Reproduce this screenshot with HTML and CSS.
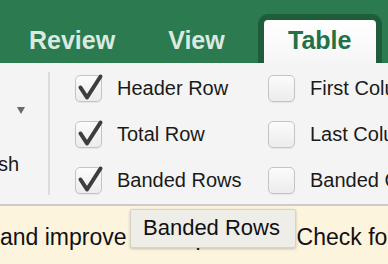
FILE: index.html
```html
<!DOCTYPE html>
<html lang="en">
<head>
    <meta charset="UTF-8">
    <meta name="viewport" content="width=device-width, initial-scale=1.0">
    <title>Table Ribbon</title>
    <link rel="stylesheet" href="styles.css">
</head>
<body>
    <nav class="tabs">
        <div class="tab">Review</div>
        <div class="tab">View</div>
        <div class="tab tab-active">Table</div>
    </nav>
    <div class="ribbon">
        <div class="refresh">
            <span class="caret"></span>
            <span class="refresh-label">Refresh</span>
        </div>
        <div class="sep"></div>
        <div class="options">
            <label class="option">
                <span class="box"><svg width="27" height="27" viewBox="0 0 27 27"><path d="M5.5 12.5 L12 22.5 L25.5 1.5" /></svg></span>
                Header Row
            </label>
            <label class="option"><span class="box"></span>First Column</label>
            <label class="option">
                <span class="box"><svg width="27" height="27" viewBox="0 0 27 27"><path d="M5.5 12.5 L12 22.5 L25.5 1.5" /></svg></span>
                Total Row
            </label>
            <label class="option"><span class="box"></span>Last Column</label>
            <label class="option">
                <span class="box"><svg width="27" height="27" viewBox="0 0 27 27"><path d="M5.5 12.5 L12 22.5 L25.5 1.5" /></svg></span>
                Banded Rows
            </label>
            <label class="option"><span class="box"></span>Banded Columns</label>
        </div>
    </div>
    <div class="banner">and improve the experience. Check for updates</div>
    <div class="tooltip">Banded Rows</div>
</body>
</html>
```

FILE: styles.css
```css
body {
    margin: 0;
    width: 388px;
    height: 264px;
    overflow: hidden;
    font-family: "Liberation Sans", Arial, sans-serif;
    background-color: #fdf4de;
    position: relative; /* tooltip anchor */
}
.tabs {
    display: flex;
    align-items: flex-end;
    height: 63px;
    box-sizing: border-box;
    padding-left: 29px;
    background-color: #2b7a50;
}
.tab {
    font-weight: bold;
    font-size: 25px;
    line-height: 28px;
    color: #dbeae0;
    padding-bottom: 9px;
}
.tab + .tab {
    margin-left: 53px;
}
.tab-active {
    margin-left: 33px !important;
    width: 112px;
    text-align: center;
    padding-top: 6px;
    border: 6px solid #1f5c39;
    border-bottom: none;
    border-radius: 10px 10px 0 0;
    background: linear-gradient(#ffffff, #f6f6f6);
    color: #217346;
}
.ribbon {
    display: flex;
    height: 141px;
    background-color: #f4f4f4;
    border-bottom: 2px solid #cbcbcb;
    white-space: nowrap;
}
.refresh {
    width: 48px;
    flex: none;
    overflow: hidden;
    display: flex;
    flex-direction: column;
    align-items: flex-end;
}
.caret {
    width: 0;
    height: 0;
    margin: 44px 23px 0 0;
    border-left: 4.5px solid transparent;
    border-right: 4.5px solid transparent;
    border-top: 7px solid #6a6a6a;
}
.refresh-label {
    margin: 39px 29px 0 0;
    font-size: 20px;
    line-height: 23px;
    color: #1a1a1a;
}
.sep {
    width: 2px;
    flex: none;
    margin: 9px 0;
    background-color: #dcdcdc;
}
.options {
    display: grid;
    grid-template-columns: 193px auto;
    row-gap: 19px;
    align-content: start;
    margin-left: 25px;
    padding-top: 12px;
}
.option {
    display: flex;
    align-items: center;
    gap: 15px;
    font-size: 20px;
    line-height: 27px;
    color: #1a1a1a;
}
.box {
    position: relative;
    flex: none;
    width: 27px;
    height: 27px;
    box-sizing: border-box;
    border: 1px solid #c4c4c4;
    border-radius: 5px;
    background: linear-gradient(#fbfbfb, #ececec);
    box-shadow: 0 1px 1px rgba(0, 0, 0, 0.06);
}
.box svg {
    position: absolute; /* check mark spills over the box edge */
    left: -1px;
    top: -1px;
    overflow: visible;
}
.box path {
    fill: none;
    stroke: #3d3d3d;
    stroke-width: 4;
    stroke-linecap: round;
    stroke-linejoin: round;
}
.banner {
    padding-top: 17px;
    font-size: 23px;
    line-height: 28px;
    white-space: nowrap;
    color: #111111;
}
.tooltip {
    position: absolute;
    left: 130px;
    top: 209px;
    width: 166px;
    height: 39px;
    box-sizing: border-box;
    padding: 5px 0 0 12px;
    border: 1px solid #d6d3cd;
    border-radius: 2px;
    background-color: #efede8;
    box-shadow: 0 1px 3px rgba(0, 0, 0, 0.22);
    font-size: 22px;
    line-height: 26px;
    color: #111111;
    white-space: nowrap;
}
```
